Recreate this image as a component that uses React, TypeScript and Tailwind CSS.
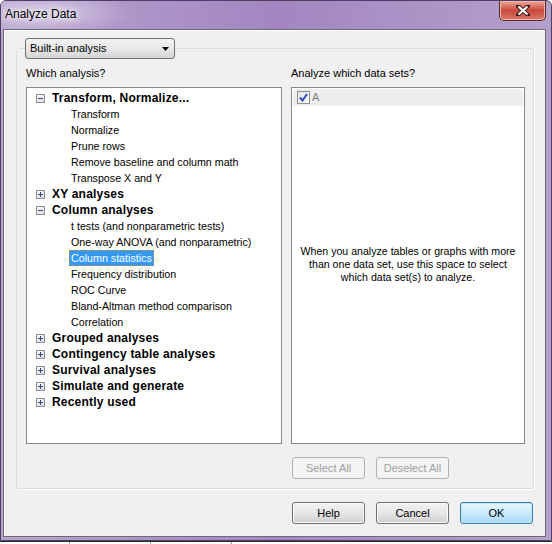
import type { ReactNode } from 'react'

type Node = { label: string; open?: boolean; items?: string[] }

const TREE: Node[] = [
  {
    label: 'Transform, Normalize...',
    open: true,
    items: ['Transform', 'Normalize', 'Prune rows', 'Remove baseline and column math', 'Transpose X and Y'],
  },
  { label: 'XY analyses' },
  {
    label: 'Column analyses',
    open: true,
    items: [
      't tests (and nonparametric tests)',
      'One-way ANOVA (and nonparametric)',
      'Column statistics',
      'Frequency distribution',
      'ROC Curve',
      'Bland-Altman method comparison',
      'Correlation',
    ],
  },
  { label: 'Grouped analyses' },
  { label: 'Contingency table analyses' },
  { label: 'Survival analyses' },
  { label: 'Simulate and generate' },
  { label: 'Recently used' },
]

const SELECTED = 'Column statistics'

function Expander({ open }: { open?: boolean }) {
  return (
    <span className="relative flex h-[9px] w-[9px] shrink-0 items-center justify-center border border-[#8e8f8f] bg-gradient-to-br from-white to-[#dcdcdc]">
      <span className="absolute h-px w-[5px] bg-[#2c4a87]" />
      {!open && <span className="absolute h-[5px] w-px bg-[#2c4a87]" />}
    </span>
  )
}

function Btn({ children, disabled, primary }: { children: ReactNode; disabled?: boolean; primary?: boolean }) {
  const look = disabled
    ? 'border-[#adb2b5] bg-[#f4f4f4] text-[#a0a0a0]'
    : primary
      ? 'border-[#3c7fb1] bg-gradient-to-b from-[#eaf6fd] via-[#c9eafc] to-[#a7d9f5] text-black shadow-[inset_0_0_0_1px_#bfe6fb]'
      : 'border-[#707070] bg-gradient-to-b from-[#f2f2f2] via-[#e6e6e6] to-[#cfcfcf] text-black shadow-[inset_0_0_0_1px_#fbfbfb]'
  return (
    <div className={`flex h-[22px] w-[73px] items-center justify-center rounded-[3px] border text-[11px] ${look}`}>
      {children}
    </div>
  )
}

export default function App() {
  return (
    <div className="h-[544px] w-[552px] overflow-hidden bg-white font-['Liberation_Sans',Arial,sans-serif] text-black">
      {/* window frame */}
      <div className="flex h-[541px] flex-col rounded-t-[6px] border border-[#4d3f63] bg-gradient-to-r from-[#b8a4cf] via-[#a386c1] to-[#b3a0cb]">
        {/* title bar */}
        <div className="flex h-[28px] shrink-0 items-start bg-[radial-gradient(ellipse_90px_22px_at_40px_12px,#d9cde6,transparent)]">
          <span className="ml-[4px] mt-[6px] text-[12px] leading-[15px] [text-shadow:0_0_5px_#fff,0_0_8px_#fff]">
            Analyze Data
          </span>
          <div className="ml-auto mr-[5px] flex h-[20px] w-[47px] items-center justify-center rounded-b-[5px] border border-t-0 border-[#5a2a2a] bg-gradient-to-b from-[#e9a99b] via-[#c9483a] to-[#d8786a] shadow-[inset_0_0_0_1px_#f0b8ad]">
            <svg width="14" height="11" viewBox="0 0 14 11">
              <path d="M2 1 L12 10 M12 1 L2 10" stroke="#3b1d1d" strokeWidth="4" strokeLinecap="square" />
              <path d="M2.5 1.5 L11.5 9.5 M11.5 1.5 L2.5 9.5" stroke="#fff" strokeWidth="2.2" />
            </svg>
          </div>
        </div>

        {/* client area */}
        <div className="ml-[2px] h-[508px] w-[543px] border border-[#6e6a7a] bg-[#f0f0f0] shadow-[inset_1px_1px_0_#fff]">
          <div className="pl-[12px] pt-[18px]">
            {/* group box with combo as caption */}
            <div className="relative h-[441px] w-[518px] rounded-[3px] border border-[#d5dfe5] pl-[9px] pt-[17px] shadow-[1px_1px_0_#fff]">
              <div className="absolute left-[8px] top-[-11px] flex h-[21px] w-[150px] items-center rounded-[3px] border border-[#707070] bg-gradient-to-b from-[#f2f2f2] via-[#e8e8e8] to-[#d4d4d4] pl-[4px] pr-[5px] text-[11px]">
                <span>Built-in analysis</span>
                <svg className="ml-auto" width="7" height="4" viewBox="0 0 7 4">
                  <path d="M0 0 H7 L3.5 4 Z" fill="#000" />
                </svg>
              </div>

              <div className="flex gap-[9px]">
                {/* left: tree */}
                <div className="w-[256px]">
                  <div className="mb-[7px] h-[14px] text-[11px] leading-[14px]">Which analysis?</div>
                  <div className="h-[357px] border border-[#828790] bg-white pt-[2px]">
                    {TREE.map((n) => (
                      <div key={n.label}>
                        <div className="flex h-[16px] items-center pl-[9px]">
                          <Expander open={n.open} />
                          <span className="ml-[7px] text-[12px] font-bold leading-[16px] tracking-[0.2px]">{n.label}</span>
                        </div>
                        {n.open &&
                          n.items?.map((it) => (
                            <div key={it} className="flex h-[16px] items-center pl-[42px]">
                              {it === SELECTED ? (
                                <span className="border border-dotted border-[#c98a2e] bg-[#3399ff] px-[1px] text-[10.7px] leading-[14px] text-white">
                                  {it}
                                </span>
                              ) : (
                                <span className="px-[2px] text-[10.7px] leading-[16px]">{it}</span>
                              )}
                            </div>
                          ))}
                      </div>
                    ))}
                  </div>
                </div>

                {/* right: data sets */}
                <div className="w-[234px]">
                  <div className="mb-[7px] h-[14px] text-[11px] leading-[14px]">Analyze which data sets?</div>
                  <div className="flex h-[357px] flex-col border border-[#828790] bg-white">
                    <div className="mx-[1px] mt-[1px] flex h-[17px] items-center bg-[#eeeeee] pl-[4px]">
                      <span className="flex h-[13px] w-[13px] items-center justify-center border border-[#8f8f8f] bg-gradient-to-br from-[#e6e6e6] to-[#fafafa]">
                        <svg width="9" height="9" viewBox="0 0 9 9">
                          <path d="M1 4.5 L3.5 7.5 L8 1" fill="none" stroke="#2a4fbf" strokeWidth="2" />
                        </svg>
                      </span>
                      <span className="ml-[2px] text-[11px] text-[#808080]">A</span>
                    </div>
                    <div className="flex flex-1 items-center justify-center pb-[21px] text-center text-[10.6px] leading-[13px]">
                      <p>
                        When you analyze tables or graphs with more
                        <br />
                        than one data set, use this space to select
                        <br />
                        which data set(s) to analyze.
                      </p>
                    </div>
                  </div>
                  <div className="ml-[1px] mt-[13px] flex gap-[11px]">
                    <Btn disabled>Select All</Btn>
                    <Btn disabled>Deselect All</Btn>
                  </div>
                </div>
              </div>
            </div>

            {/* dialog buttons */}
            <div className="ml-[276px] mt-[13px] flex gap-[11px]">
              <Btn>Help</Btn>
              <Btn>Cancel</Btn>
              <Btn primary>OK</Btn>
            </div>
          </div>
        </div>
      </div>

      {/* window behind */}
      <div className="flex h-[3px] border-t border-[#2b2b2b]">
        <div className="w-[70px] border-r border-[#a0a0a0]" />
        <div className="w-[81px] border-r border-[#a0a0a0]" />
        <div className="w-[81px] border-r border-[#a0a0a0]" />
      </div>
    </div>
  )
}
